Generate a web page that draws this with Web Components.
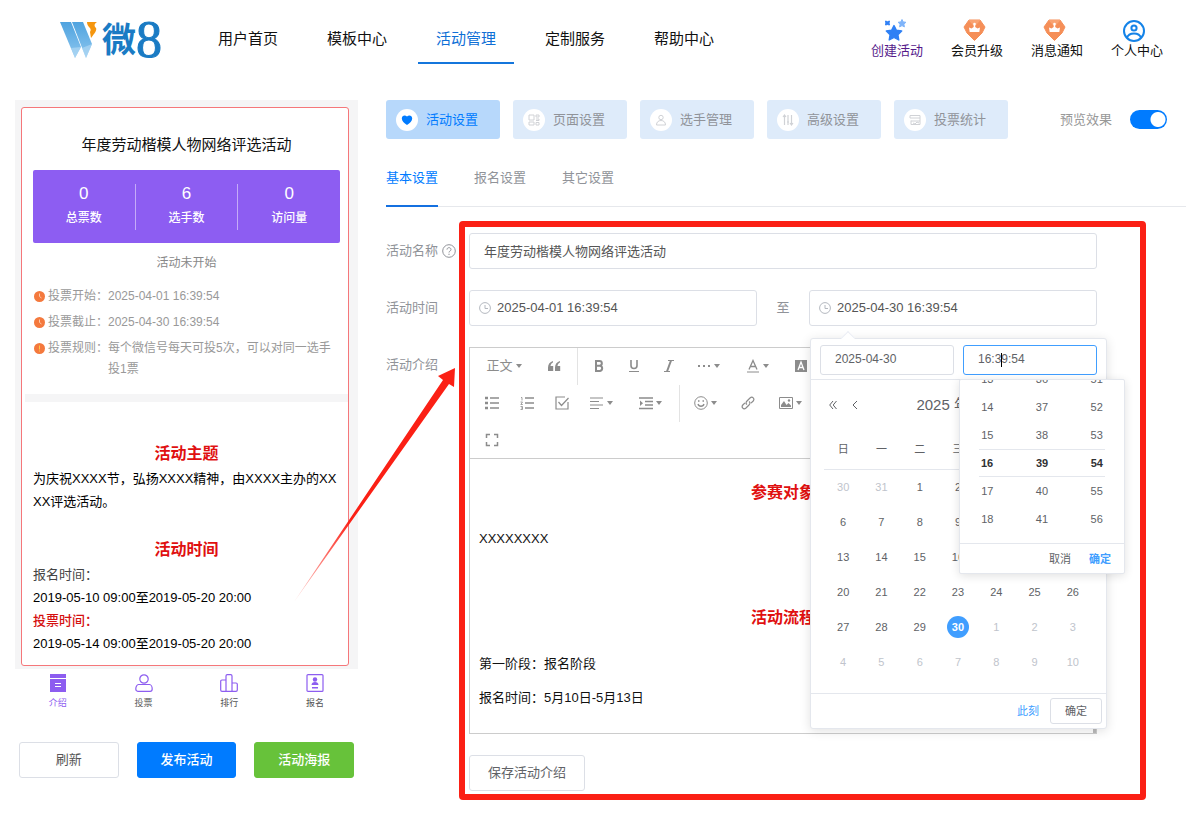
<!DOCTYPE html>
<html lang="zh-CN">
<head>
<meta charset="utf-8">
<meta name="viewport" content="width=device-width, initial-scale=1">
<title>活动管理</title>
<style>
  body { margin: 0; background: #fff; color: #333; font: 13px/20px "Liberation Sans", "Noto Sans CJK SC", sans-serif; }
</style>
</head>
<body>
<vote-app></vote-app>

<script>
const BASE = `
  *, *::before, *::after { box-sizing: border-box; }
  button, input { font: inherit; color: inherit; margin: 0; }
  button { cursor: pointer; padding: 0; background: none; border: 0; }
  a { color: inherit; text-decoration: none; }
  svg { display: block; flex: none; }
  p, h1, h2 { margin: 0; font-size: inherit; font-weight: inherit; }
`;

function define(name, css, html) {
  const template = document.createElement('template');
  template.innerHTML = `<style>${BASE}${css}</style>${html}`;
  customElements.define(name, class extends HTMLElement {
    constructor() {
      super();
      this.attachShadow({ mode: 'open' }).append(template.content.cloneNode(true));
    }
  });
}

/* ---------- brand ---------- */
define('brand-logo', `
  :host { display: flex; align-items: center; width: 98px; height: 40px; color: #1a7bc4; }
  .mark { margin-right: 4px; }
  .word { font-size: 34px; line-height: 40px; font-weight: 700; }
  .num { font: 52px/40px "Liberation Serif", serif; -webkit-text-stroke: 1px #1a7bc4; }
`, `
  <svg class="mark" width="38" height="38" viewBox="0 0 38 38" aria-hidden="true">
    <defs><linearGradient id="w" x1="0" y1="0" x2="0" y2="1"><stop offset="0" stop-color="#4fa3df"/><stop offset="1" stop-color="#8cc6ef"/></linearGradient></defs>
    <path d="M0 1h11l10 25-6 11z" fill="url(#w)"/>
    <path d="M12 1h11l9 22-6 14z" fill="url(#w)"/>
    <path d="M15 37l-4-10 10-1zM26 37l-4-10 10-4z" fill="#b9dcf5" opacity=".6"/>
    <path d="M27 1h10c-3 2-3 4-1 6 1 2-1 5-5 10l-1-6c1-2 1-3-1-5-1-1-2-3-2-5z" fill="#f5960f"/>
  </svg>
  <span class="word">微</span><span class="num">8</span>
`);

/* ---------- header ---------- */
define('header-action', `
  :host { display: block; }
  a { display: flex; flex-direction: column; align-items: center; }
`, `<a href="#"><slot name="icon"></slot><slot></slot></a>`);

define('app-header', `
  :host { display: flex; align-items: flex-start; height: 100px; padding: 0 37px 0 60px; color: #111; }
  brand-logo { margin: 20px 42px 0 0; }
  nav { display: flex; gap: 13px; font-size: 15px; }
  nav a { padding: 29px 18px 13px; border-bottom: 2px solid transparent; white-space: nowrap; }
  nav a[aria-current] { color: #0f6fd6; border-color: #1476dc; }
  .actions { margin-left: auto; display: flex; gap: 28px; padding-top: 18px; white-space: nowrap; }
  .actions svg { margin-bottom: -1px; }
  .visited { color: #551a8b; }
`, `
  <brand-logo></brand-logo>
  <nav>
    <a href="#">用户首页</a><a href="#">模板中心</a><a href="#" aria-current="page">活动管理</a><a href="#">定制服务</a><a href="#">帮助中心</a>
  </nav>
  <div class="actions">
    <header-action class="visited"><svg slot="icon" width="28" height="24" viewBox="0 0 28 24">
      <path d="M11 7.500l2.400 4.700 5.300.8-3.800 3.700.9 5.300-4.800-2.500L6.200 22l.9-5.300L3.300 13l5.300-.8z" fill="#2f80f5" stroke="#2f80f5" stroke-width="1.400" stroke-linejoin="round"/>
      <path d="M19 1.500l1.200 2.400 2.700.4-2 1.900.5 2.700-2.400-1.300-2.400 1.300.5-2.700-2-1.900 2.700-.4z" fill="#7fb4fa" stroke="#7fb4fa" stroke-linejoin="round"/>
      <path d="M2.500 3l2 .7 2-.7-.5 2 .5 2-2-.5-2 .5.400-2z" fill="#2f80f5" stroke="#2f80f5" stroke-linejoin="round"/>
    </svg>创建活动</header-action>
    <header-action><svg slot="icon" width="28" height="24" viewBox="0 0 28 24">
      <path d="M6 2h11l5 7-3 6-7.500 7.500L4 15 1 9z" fill="#f58f58" stroke="#f58f58" stroke-linejoin="round"/>
      <path d="M5.500 2h12l-6 7z" fill="#fbb084" opacity=".6"/>
      <path d="M6 9.500l2.500 1L10.700 9V6.500h1.500V9l2.300 1.500 2.500-1-.7 4.500H6.700z" fill="#fff"/><circle cx="11.500" cy="6" r="1.300" fill="#fff"/>
    </svg>会员升级</header-action>
    <header-action><svg slot="icon" width="28" height="24" viewBox="0 0 28 24">
      <path d="M6 2h11l5 7-3 6-7.500 7.500L4 15 1 9z" fill="#f58f58" stroke="#f58f58" stroke-linejoin="round"/>
      <path d="M5.500 2h12l-6 7z" fill="#fbb084" opacity=".6"/>
      <path d="M6 9.500l2.500 1L10.700 9V6.500h1.500V9l2.300 1.500 2.500-1-.7 4.500H6.700z" fill="#fff"/><circle cx="11.500" cy="6" r="1.300" fill="#fff"/>
    </svg>消息通知</header-action>
    <header-action><svg slot="icon" width="28" height="24" viewBox="0 0 28 24" fill="none" stroke="#1483e8" stroke-width="2">
      <circle cx="11" cy="13" r="10"/><circle cx="11" cy="10" r="2.600"/><path d="M4 20c1-3.500 4-4.500 7-4.500s6 1 7 4.500"/>
    </svg>个人中心</header-action>
  </div>
`);

/* ---------- phone preview ---------- */
define('info-line', `
  :host { display: flex; align-items: flex-start; font-size: 12px; line-height: 21px; color: #999; }
  ::slotted(svg) { flex: none; margin: 5px 3px 0 1px; }
  .term { flex: none; width: 60px; white-space: nowrap; }
`, `<slot name="icon"></slot><span class="term"><slot name="term"></slot></span><span><slot></slot></span>`);

define('stat-cell', `
  :host { flex: 1; display: flex; flex-direction: column; align-items: center; gap: 4px; height: 46px; }
  .value { font-size: 17px; line-height: 20px; }
  .name { font-size: 12px; line-height: 20px; font-weight: 500; }
`, `<span class="value"><slot name="value"></slot></span><span class="name"><slot></slot></span>`);

define('phone-tab', `
  :host { flex: 1; display: block; text-align: center; font-size: 9px; line-height: 12px; color: #555; }
  :host([active]) { color: #8d5df0; }
  a { display: flex; flex-direction: column; align-items: center; gap: 5px; }
`, `<a href="#"><slot name="icon"></slot><slot></slot></a>`);

define('phone-preview', `
  :host { display: block; }
  .shell { background: #f5f5f6; padding: 7px 9px 3px 6px; }
  .screen { border: 1px solid #f5777a; border-radius: 3px; background: #fff; color: #000; }
  .top { padding: 26px 8px 14px 11px; }
  h1 { text-align: center; font-size: 15px; line-height: 22px; color: #111; }
  .stats { display: flex; margin-top: 14px; padding: 14px 0 13px; border-radius: 2px; background: #8d5df2; color: #fff; }
  stat-cell + stat-cell { border-left: 1px solid #c5abf8; }
  .state { margin: 10px 0 13px; text-align: center; font-size: 12px; color: #888; }
  info-line + info-line { margin-top: 5px; }
  .gap { height: 8px; margin-left: 3px; background: #f5f5f6; }
  .intro { padding: 38px 8px 10px 11px; line-height: 23px; }
  h2 { text-align: center; font-size: 16px; line-height: 27px; font-weight: 700; color: #e01010; }
  .intro p { word-break: break-all; }
  .intro p + h2 { margin-top: 23px; }
  .soft { color: #444; }
  .red { color: #d50f0f; font-weight: 500; }
  .tabbar { display: flex; padding-top: 5px; margin-bottom: 33px; }
  .buttons { display: flex; gap: 18px; padding: 0 4px; }
  .buttons button { flex: 1; height: 36px; border-radius: 3px; border: 1px solid #dcdfe6; color: #555; }
  .buttons .blue { background: #007bff; border-color: #007bff; color: #fff; font-weight: 500; }
  .buttons .green { background: #67c23a; border-color: #67c23a; color: #fff; font-weight: 500; }
`, `
  <div class="shell"><div class="screen">
    <div class="top">
      <h1>年度劳动楷模人物网络评选活动</h1>
      <div class="stats">
        <stat-cell><span slot="value">0</span>总票数</stat-cell>
        <stat-cell><span slot="value">6</span>选手数</stat-cell>
        <stat-cell><span slot="value">0</span>访问量</stat-cell>
      </div>
      <p class="state">活动未开始</p>
      <info-line><svg slot="icon" width="11" height="11" viewBox="0 0 11 11"><circle cx="5.500" cy="5.500" r="5.500" fill="#f4793d"/><path d="M5.500 2.500v3l2 1.500" fill="none" stroke="#ffc9a8"/></svg><span slot="term">投票开始：</span>2025-04-01 16:39:54</info-line>
      <info-line><svg slot="icon" width="11" height="11" viewBox="0 0 11 11"><circle cx="5.500" cy="5.500" r="5.500" fill="#f4793d"/><path d="M5.500 2.500v3l2 1.500" fill="none" stroke="#ffc9a8"/></svg><span slot="term">投票截止：</span>2025-04-30 16:39:54</info-line>
      <info-line><svg slot="icon" width="11" height="11" viewBox="0 0 11 11"><circle cx="5.500" cy="5.500" r="5.500" fill="#f4793d"/><path d="M5.500 2.500v4M5.500 7.500v1" fill="none" stroke="#ffc94a"/></svg><span slot="term">投票规则：</span>每个微信号每天可投5次，可以对同一选手投1票</info-line>
    </div>
    <div class="gap"></div>
    <div class="intro">
      <h2>活动主题</h2>
      <p>为庆祝XXXX节，弘扬XXXX精神，由XXXX主办的XXXX评选活动。</p>
      <h2>活动时间</h2>
      <p class="soft">报名时间：</p>
      <p>2019-05-10 09:00至2019-05-20 20:00</p>
      <p class="red">投票时间：</p>
      <p>2019-05-14 09:00至2019-05-20 20:00</p>
    </div>
  </div></div>
  <div class="tabbar">
    <phone-tab active><svg slot="icon" width="18" height="18" viewBox="0 0 18 18"><path d="M1 0h16v4H1zM1 5h16v13H1z" fill="#8d5df0"/><path d="M6 9.500h6M6 12.500h6" stroke="#fff"/></svg>介绍</phone-tab>
    <phone-tab><svg slot="icon" width="18" height="18" viewBox="0 0 18 18" fill="none" stroke="#8d5df0" stroke-width="1.200"><circle cx="9" cy="5" r="4.200"/><path d="M3.500 10.500h11c1.600 0 2.700 2.500 2.700 4.500 0 1.500-.8 2.300-2 2.300H2.800c-1.200 0-2-.8-2-2.300 0-2 1.100-4.500 2.700-4.500z"/></svg>投票</phone-tab>
    <phone-tab><svg slot="icon" width="18" height="18" viewBox="0 0 18 18" fill="none" stroke="#8d5df0" stroke-width="1.200"><path d="M6 17.300V2c0-.8.5-1.400 1.300-1.400h3.400c.8 0 1.300.6 1.300 1.400v15.300zM6 6H2C1.200 6 .7 6.500.7 7.200v8.800c0 .8.500 1.300 1.300 1.300h4M12 9h4c.8 0 1.300.5 1.300 1.200v5.800c0 .8-.5 1.300-1.300 1.300h-4"/></svg>排行</phone-tab>
    <phone-tab><svg slot="icon" width="18" height="18" viewBox="0 0 18 18"><rect x="1" y=".6" width="16" height="16.800" rx="1" fill="none" stroke="#8d5df0" stroke-width="1.200"/><circle cx="9" cy="5.500" r="2.200" fill="#8d5df0"/><path d="M5.500 11c0-2 1.500-3 3.500-3s3.500 1 3.500 3zM6 13h6v1.500H6z" fill="#8d5df0"/></svg>报名</phone-tab>
  </div>
  <div class="buttons">
    <button type="button">刷新</button>
    <button type="button" class="blue">发布活动</button>
    <button type="button" class="green">活动海报</button>
  </div>
`);

/* ---------- step buttons and sub tabs ---------- */
define('step-button', `
  :host { display: block; flex: 0 1 114px; }
  button { display: flex; align-items: center; gap: 8px; width: 100%; height: 39px; padding-left: 10px; border-radius: 3px; background: #deebfa; color: #909399; white-space: nowrap; }
  .icon { display: grid; place-items: center; width: 22px; height: 22px; border-radius: 50%; background: #fff; color: #d0d2d6; flex: none; }
  :host([active]) button { background: #b7d8fb; color: #007bff; }
  :host([active]) .icon { color: #007bff; }
`, `<button type="button"><span class="icon"><slot name="icon"></slot></span><slot></slot></button>`);

define('step-bar', `
  :host { display: flex; align-items: center; gap: 13px; }
  label { display: flex; align-items: center; gap: 18px; margin: 0 19px 0 auto; color: #999; white-space: nowrap; }
  input { appearance: none; width: 37px; height: 19px; border-radius: 10px; background: #007bff radial-gradient(circle at 28px 50%, #fff 7px, transparent 8px); }
`, `
  <step-button active><svg slot="icon" width="12" height="12" viewBox="0 0 12 12"><path d="M6 11C3 9 .8 7 .8 4.500.8 1.500 4 .8 6 2.500 8 .8 11.200 1.500 11.200 4.500 11.200 7 9 9 6 11z" fill="currentColor"/></svg>活动设置</step-button>
  <step-button><svg slot="icon" width="12" height="12" viewBox="0 0 12 12" fill="none" stroke="currentColor"><path d="M1 1h5v5H1zM1 8h5v3H1zM8 1h3v2H8zM8 5h3v1.500H8M8 8.500h3V11H8z"/></svg>页面设置</step-button>
  <step-button><svg slot="icon" width="12" height="12" viewBox="0 0 12 12" fill="none" stroke="currentColor"><circle cx="6" cy="3.500" r="2.200"/><path d="M1.500 11c0-3 2-4.500 4.500-4.500s4.500 1.500 4.500 4.500z"/></svg>选手管理</step-button>
  <step-button><svg slot="icon" width="12" height="12" viewBox="0 0 12 12" fill="none" stroke="currentColor" stroke-width="1.200"><path d="M2.500 1v10M1 3l1.500-2L4 3M6 1v10M5 8h2M9.500 1v10M8 9l1.500 2L11 9"/></svg>高级设置</step-button>
  <step-button><svg slot="icon" width="12" height="12" viewBox="0 0 12 12" fill="none" stroke="currentColor"><path d="M1 1.500h10v9H2v-4M1 1.500V4h10M2 7h9M4 9l2 1 2-2 2 1"/></svg>投票统计</step-button>
  <label>预览效果<input type="checkbox" role="switch" checked></label>
`);

define('sub-tabs', `
  :host { display: flex; gap: 36px; margin: 26px 0; color: #909399; box-shadow: inset 0 -1px #e6e8ec; }
  a { padding-bottom: 14px; line-height: 26px; border-bottom: 2px solid transparent; white-space: nowrap; }
  a[aria-current] { color: #007bff; border-color: #1470e0; }
`, `<a href="#" aria-current="true">基本设置</a><a href="#">报名设置</a><a href="#">其它设置</a>`);

/* ---------- rich text editor ---------- */
const caret = '<svg width="6" height="4" viewBox="0 0 6 4"><path d="M0 0h6L3 4z" fill="currentColor"/></svg>';
const icon = (body, size = 14) => `<svg width="${size}" height="${size}" viewBox="0 0 14 14" fill="none" stroke="currentColor">${body}</svg>`;

define('tool-button', `
  :host { display: block; flex: 0 0 35px; }
  :host([size="m"]) { flex-basis: 45px; }
  :host([size="l"]) { flex-basis: 52px; }
  :host([size="xl"]) { flex-basis: 60px; }
  button { display: flex; align-items: center; justify-content: center; gap: 3px; width: 100%; height: 36px; color: inherit; }
`, `<button type="button"><slot></slot></button>`);

define('rich-editor', `
  :host { display: block; border: 1px solid #ccc; position: relative; }
  .toolbar { padding: 0 4px; border-bottom: 1px solid #ccc; color: #8c8c8c; overflow: hidden; }
  .row { display: flex; height: 37px; }
  .row:last-child { height: 36px; }
  .sep { flex: none; width: 1px; margin: 0 3px; background: #e3e3e3; }
  .content { padding: 17px 9px 18px; line-height: 34px; color: #111; outline: 0; }
  h2 { margin: 45px 0 12px; text-align: center; font-size: 16px; line-height: 34px; font-weight: 700; color: #e01010; }
  h2:first-child { margin-top: 0; }
  .thumb { position: absolute; right: 0; bottom: 0; width: 3px; height: 7px; background: #bbb; }
`, `
  <div class="toolbar">
    <div class="row">
      <tool-button size="xl">正文${caret}</tool-button>
      <tool-button aria-label="引用" style="flex-basis:40px">${icon('<path d="M6 2C3 3 1 5 1 8.500V12h5.200V7H3.500C3.600 5.500 4.500 4 6 3.500zM13 2C10 3 8 5 8 8.500V12h5.200V7h-2.700c.1-1.500 1-3 2.500-3.500z" fill="currentColor" stroke="none"/>')}</tool-button>
      <span class="sep"></span>
      <tool-button aria-label="粗体">${icon('<path d="M4 2h3.500a2.300 2.300 0 0 1 0 4.700H4zM4 6.700h4a2.700 2.700 0 0 1 0 5.300H4z" stroke-width="2"/>')}</tool-button>
      <tool-button aria-label="下划线">${icon('<path d="M4 1v5.500c0 4 6 4 6 0V1" stroke-width="1.600"/><path d="M2 12.500h10"/>')}</tool-button>
      <tool-button aria-label="斜体">${icon('<path d="M9 1.500L5 12.500" stroke-width="2"/><path d="M6 1.500h6M2 12.500h6"/>')}</tool-button>
      <tool-button size="m" aria-label="更多">${icon('<path d="M1 7h2M6 7h2M11 7h2" stroke-width="2"/>')}${caret}</tool-button>
      <tool-button size="l" aria-label="文字颜色">${icon('<path d="M3 10.500L7 1.500l4 9M4.500 7.500h5" stroke-width="1.300"/><path d="M1 13h12"/>')}${caret}</tool-button>
      <tool-button size="m" aria-label="背景色">${icon('<path d="M1 1h12v12H1z" fill="currentColor" stroke="none"/><path d="M4 11l3-8 3 8M5 8.500h4" stroke="#fff" stroke-width="1.300"/>')}${caret}</tool-button>
    </div>
    <div class="row">
      <tool-button aria-label="无序列表">${icon('<path d="M0 2h3M0 7h3M0 12h3" stroke-width="2.400"/><path d="M5 2h9M5 7h9M5 12h9" stroke-width="1.300"/>')}</tool-button>
      <tool-button aria-label="有序列表">${icon('<path d="M1 1.500h1v3M.5 6h2L.8 8.500h2M.5 10.500h2v3h-2M1 12h1.500" stroke-width=".8"/><path d="M5 2h9M5 7h9M5 12h9" stroke-width="1.300"/>')}</tool-button>
      <tool-button aria-label="待办">${icon('<path d="M13 6v7H1V1h9M3.500 6l3 3.500L13.500 2" stroke-width="1.200"/>')}</tool-button>
      <tool-button size="m" aria-label="对齐">${icon('<path d="M0 2h13M0 5.500h9M0 9h13M0 12.500h9" stroke-width="1.200"/>')}${caret}</tool-button>
      <tool-button size="l" aria-label="缩进">${icon('<path d="M0 2h14M6 5.500h8M6 9h8M0 12.500h14" stroke-width="1.400"/><path d="M1 4.500l3 2.800L1 10z" fill="currentColor" stroke="none"/>')}${caret}</tool-button>
      <span class="sep"></span>
      <tool-button size="m" aria-label="表情">${icon('<circle cx="7" cy="7" r="6.300"/><path d="M4 8c.8 3 5.200 3 6 0M4 5h1.500M8.500 5H10" stroke-width="1.300"/>')}${caret}</tool-button>
      <tool-button aria-label="链接" style="flex-basis:40px">${icon('<path d="M6 8.500c-1.500-1-1-2.500 0-3.500L9 2c2.500-2 5 .8 3.200 3L10 7.200M8 5.500c1.500 1 1 2.500 0 3.500l-3 3c-2.500 2-5-.8-3.200-3L4 6.800" stroke-width="1.200"/>')}</tool-button>
      <tool-button size="m" aria-label="图片">${icon('<path d="M.5 1.500h13v11H.5z"/><path d="M2 11V9l3-4 2.500 4 2-2L12 9.500V11z" fill="currentColor" stroke="none"/><circle cx="10" cy="4.500" r="1.200" fill="currentColor" stroke="none"/>')}${caret}</tool-button>
    </div>
    <div class="row">
      <tool-button aria-label="全屏">${icon('<path d="M1.500 5V1.500H5M9 1.500h3.500V5M12.500 9v3.500H9M5 12.500H1.500V9" stroke-width="1.500"/>')}</tool-button>
    </div>
  </div>
  <div class="content">
    <h2>参赛对象</h2>
    <p>XXXXXXXX</p>
    <h2>活动流程</h2>
    <p>第一阶段：报名阶段</p>
    <p>报名时间：5月10日-5月13日</p>
  </div>
  <span class="thumb"></span>
`);

/* ---------- time list ---------- */
const timeRows = [[13, 36, 51], [14, 37, 52], [15, 38, 53], [16, 39, 54], [17, 40, 55], [18, 41, 56]];
define('time-panel', `
  :host { display: block; width: 166px; border: 1px solid #e4e7ed; border-radius: 2px; background: #fff; box-shadow: 0 2px 10px rgba(0,0,0,.12); font-size: 11px; color: #606266; }
  .list { height: 163px; overflow: hidden; display: flex; flex-direction: column; justify-content: flex-end; padding-bottom: 10px; }
  .row { display: grid; grid-template-columns: repeat(3, 1fr); text-align: center; line-height: 28px; flex: none; }
  .now { color: #303133; font-weight: 700; line-height: 26px; margin: 0 19px; border: solid #e4e7ed; border-width: 1px 0; }
  .now span:first-child { text-align: left; padding-left: 2px; }
  .now span:last-child { text-align: right; padding-right: 2px; }
  footer { display: flex; justify-content: flex-end; align-items: center; gap: 18px; height: 30px; padding-right: 13px; border-top: 1px solid #e4e7ed; }
  .ok { color: #409eff; font-weight: 700; }
`, `
  <div class="list">${timeRows.map((r, i) => `<div class="row${i === 3 ? ' now' : ''}">${r.map(n => `<span>${n}</span>`).join('')}</div>`).join('')}</div>
  <footer><button type="button">取消</button><button type="button" class="ok">确定</button></footer>
`);

/* ---------- date popup ---------- */
const days = [30, 31, ...Array.from({ length: 30 }, (_, i) => i + 1), ...Array.from({ length: 10 }, (_, i) => i + 1)];
const dayRows = Array.from({ length: 6 }, (_, w) => '<tr>' + days.slice(w * 7, w * 7 + 7).map((d, i) => {
  const k = w * 7 + i;
  const cls = k < 2 || k > 31 ? 'out' : k === 31 ? 'on' : '';
  return `<td class="${cls}"><span>${d}</span></td>`;
}).join('') + '</tr>').join('');

define('date-popup', `
  :host { display: block; width: 297px; border: 1px solid #e4e7ed; border-radius: 3px; background: #fff; box-shadow: 0 2px 11px rgba(0,0,0,.12); color: #606266; }
  .tip { position: absolute; top: -6px; left: 32px; width: 10px; height: 10px; background: #fff; border: solid #ebeef5; border-width: 1px 0 0 1px; transform: rotate(45deg); }
  .inputs { display: flex; gap: 9px; padding: 6px 9px 4px; border-bottom: 1px solid #e4e7ed; }
  .field { flex: 1; position: relative; }
  input { width: 100%; height: 30px; padding: 0 13px 2px 14px; border: 1px solid #dcdfe6; border-radius: 3px; font-size: 12px; outline: 0; background: #fff; display: block; }
  .active input { border-color: #409eff; }
  .cursor { position: absolute; left: 38px; top: 8px; width: 1px; height: 14px; background: #000; }
  time-panel { position: absolute; z-index: 2; left: -4px; top: calc(100% + 4px); }
  .nav { display: flex; align-items: center; gap: 14px; height: 50px; padding: 0 18px; color: #606266; }
  .nav h2 { flex: 1; text-align: center; font-size: 15px; }
  table { width: 268px; margin: 0 13px 14px; border-collapse: collapse; table-layout: fixed; font-size: 11px; text-align: center; }
  th { height: 39px; padding: 0; font-weight: 400; border-bottom: 1px solid #e4e7ed; }
  td { height: 35px; padding: 0; }
  td span { display: inline-block; width: 22px; line-height: 22px; border-radius: 50%; }
  .out { color: #c0c4cc; }
  .on span { background: #409eff; color: #fff; font-weight: 700; }
  footer { display: flex; justify-content: flex-end; align-items: center; gap: 11px; height: 35px; padding-right: 4px; border-top: 1px solid #e4e7ed; font-size: 11px; }
  .now { color: #409eff; }
  .ok { width: 52px; height: 26px; border: 1px solid #dcdfe6; border-radius: 3px; }
`, `
  <span class="tip"></span>
  <div class="inputs">
    <div class="field"><input type="text" aria-label="选择日期" value="2025-04-30"></div>
    <div class="field active"><input type="text" aria-label="选择时间" value="16:39:54"><span class="cursor"></span><time-panel></time-panel></div>
  </div>
  <div class="nav">
    <button type="button" aria-label="前一年"><svg width="8" height="8" viewBox="0 0 8 8" fill="none" stroke="currentColor"><path d="M4 0L.7 4 4 8M7.500 0L4.200 4l3.300 4"/></svg></button>
    <button type="button" aria-label="上个月"><svg width="8" height="8" viewBox="0 0 8 8" fill="none" stroke="currentColor"><path d="M6 0L2 4l4 4"/></svg></button>
    <h2>2025 年 4 月</h2>
    <button type="button" aria-label="下个月"><svg width="8" height="8" viewBox="0 0 8 8" fill="none" stroke="currentColor"><path d="M2 0l4 4-4 4"/></svg></button>
    <button type="button" aria-label="后一年"><svg width="8" height="8" viewBox="0 0 8 8" fill="none" stroke="currentColor"><path d="M.5 0l3.300 4L.5 8M4 0l3.300 4L4 8"/></svg></button>
  </div>
  <table>
    <thead><tr><th>日</th><th>一</th><th>二</th><th>三</th><th>四</th><th>五</th><th>六</th></tr></thead>
    <tbody>${dayRows}</tbody>
  </table>
  <footer><button type="button" class="now">此刻</button><button type="button" class="ok">确定</button></footer>
`);

/* ---------- form ---------- */
const clock = '<svg class="clock" width="12" height="12" viewBox="0 0 12 12" fill="none" stroke="#b4b8bf"><circle cx="6" cy="6" r="5.400"/><path d="M6 3v3.500h3"/></svg>';

define('activity-form', `
  :host { display: block; position: relative; padding-right: 89px; }
  form { display: grid; grid-template-columns: 83px minmax(0, 1fr); row-gap: 21px; }
  .label { display: flex; align-items: center; gap: 4px; height: 36px; color: #909399; white-space: nowrap; }
  input { display: block; width: 100%; height: 36px; padding: 0 14px 2px; border: 1px solid #dcdfe6; border-radius: 3px; background: #fff; color: #555; outline: 0; }
  .range { display: grid; grid-template-columns: minmax(0, 1fr) 52px minmax(0, 1fr); align-items: center; text-align: center; color: #909399; }
  .date { position: relative; text-align: left; }
  .date input { padding-left: 27px; }
  .clock { position: absolute; left: 10px; top: 12px; }
  date-popup { position: absolute; z-index: 5; left: 1px; top: calc(100% + 12px); }
  .save { grid-column: 2; justify-self: start; width: 116px; height: 36px; border: 1px solid #dcdfe6; border-radius: 3px; color: #606266; }
  .frame { position: absolute; z-index: 9; inset: -12px 40px -9px 73px; border: 6px solid #fb2015; border-radius: 4px; pointer-events: none; }
  .arrow { position: absolute; z-index: 9; left: -92px; top: 134px; pointer-events: none; }
`, `
  <form>
    <label class="label" for="name">活动名称<svg width="14" height="14" viewBox="0 0 14 14" fill="none" stroke="#909399"><circle cx="7" cy="7" r="6.300"/><path d="M5 5.600c0-2.600 4-2.600 4 0C9 7 7 7 7 8.500M7 9.700v1.300"/></svg></label>
    <input id="name" type="text" value="年度劳动楷模人物网络评选活动">
    <label class="label" for="start">活动时间</label>
    <div class="range">
      <div class="date"><input id="start" type="text" value="2025-04-01 16:39:54">${clock}</div>
      <span>至</span>
      <div class="date"><input id="end" type="text" aria-label="结束时间" value="2025-04-30 16:39:54">${clock}<date-popup></date-popup></div>
    </div>
    <span class="label">活动介绍</span>
    <rich-editor></rich-editor>
    <button type="button" class="save">保存活动介绍</button>
  </form>
  <div class="frame"></div>
  <svg class="arrow" width="164" height="236" viewBox="0 0 164 236" aria-hidden="true">
    <defs><linearGradient id="tail" x1="0" y1="1" x2=".3" y2=".6"><stop offset="0" stop-color="#fb2015" stop-opacity=".2"/><stop offset="1" stop-color="#fb2015"/></linearGradient></defs>
    <path d="M0 235L149 13l-5-4 17-8-1 19-5-3z" fill="url(#tail)"/>
  </svg>
`);

/* ---------- page ---------- */
define('vote-app', `
  :host { display: block; padding-bottom: 25px; }
  main { display: grid; grid-template-columns: 343px minmax(0, 1fr); gap: 28px; padding: 0 14px 0 15px; }
`, `
  <app-header></app-header>
  <main>
    <phone-preview></phone-preview>
    <section>
      <step-bar></step-bar>
      <sub-tabs></sub-tabs>
      <activity-form></activity-form>
    </section>
  </main>
`);
</script>
</body>
</html>
